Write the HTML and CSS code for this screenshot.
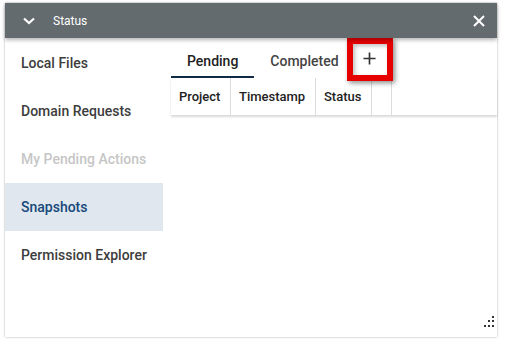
FILE: index.html
```html
<!DOCTYPE html>
<html lang="en">

<head>
  <meta charset="UTF-8" />
  <meta name="viewport" content="width=device-width, initial-scale=1.0" />
  <title>Status</title>
  <link rel="stylesheet" href="styles.css">
</head>

<body>

  <div class="panel">
    <div class="panel-header">
      <svg class="chevron" viewBox="0 0 12 8" width="12" height="8">
        <path d="M1 1.5 L6 6 L11 1.5" fill="none" stroke="#fff" stroke-width="2.2" />
      </svg>
      <span class="panel-title">Status</span>
      <svg class="close" viewBox="0 0 12 12" width="12" height="12">
        <path d="M1 1 L11 11 M11 1 L1 11" fill="none" stroke="#fff" stroke-width="2" />
      </svg>
    </div>

    <div class="panel-body">
      <div class="sidebar">
        <div class="nav-item">Local Files</div>
        <div class="nav-item">Domain Requests</div>
        <div class="nav-item disabled">My Pending Actions</div>
        <div class="nav-item active">Snapshots</div>
        <div class="nav-item">Permission Explorer</div>
      </div>

      <div class="main">
        <div class="tabs">
          <div class="tab active">Pending</div>
          <div class="tab">Completed</div>
          <div class="tab-add">
            <svg viewBox="0 0 14 14" width="13" height="13">
              <path d="M7 0.5 V13.5 M0.5 7 H13.5" fill="none" stroke="#333" stroke-width="1.8" />
            </svg>
          </div>
        </div>

        <div class="table-head">
          <div class="col">Project</div>
          <div class="col">Timestamp</div>
          <div class="col">Status</div>
          <div class="col"></div>
          <div class="col last"></div>
        </div>
      </div>
    </div>

    <svg class="grip" viewBox="0 0 12 12" width="12" height="12">
      <rect x="9" y="0" width="2" height="2" fill="#333" />
      <rect x="5" y="4" width="2" height="2" fill="#333" />
      <rect x="9" y="4" width="2" height="2" fill="#333" />
      <rect x="1" y="9" width="2" height="2" fill="#333" />
      <rect x="5" y="9" width="2" height="2" fill="#333" />
      <rect x="9" y="9" width="2" height="2" fill="#333" />
    </svg>
  </div>

</body>

</html>
```

FILE: styles.css
```css
body {
  font-family: Roboto, "Noto Sans", sans-serif;
  background: #fff;
  margin: 0;
  padding: 0;
  height: 100vh;
  overflow: hidden;
}

.panel {
  position: relative;
  margin: 3px 8px 0 5px;
  height: 334px;
  display: flex;
  flex-direction: column;
  background: #fff;
  box-shadow: 0 0 2px rgba(0, 0, 0, 0.35);
}

.panel-header {
  height: 35px;
  flex-shrink: 0;
  background: #646b6e;
  display: flex;
  align-items: center;
  padding: 0 12px 0 18px;
  box-shadow: 0 2px 4px rgba(0, 0, 0, 0.3);
  position: relative;
  z-index: 2;
}

.chevron {
  display: block;
}

.panel-title {
  color: #fff;
  font-size: 12px;
  margin-left: 18px;
  flex: 1;
}

.close {
  display: block;
}

.panel-body {
  flex: 1;
  display: flex;
}

.sidebar {
  width: 158px;
  margin-top: 1px;
}

.nav-item {
  height: 48px;
  display: flex;
  align-items: center;
  padding-left: 16px;
  font-size: 14px;
  font-weight: 500;
  color: #3d3d3d;
}

.nav-item.disabled {
  color: #c6c6c6;
}

.nav-item.active {
  background: #e0e7ee;
  color: #17497a;
}

.main {
  flex: 1;
  padding-left: 8px;
}

.tabs {
  display: flex;
  height: 40px;
}

.tab {
  padding: 7px 16px 0;
  display: flex;
  align-items: center;
  border-bottom: 2px solid transparent;
  font-size: 14px;
  font-weight: 500;
  color: #444;
}

.tab.active {
  border-bottom-color: #0f2b46;
  color: #222;
}

.tab-add {
  position: relative;
  z-index: 1;
  box-sizing: border-box;
  width: 46px;
  height: 43px;
  margin-left: -8px;
  border: 6px solid #e60000;
  display: flex;
  align-items: center;
  justify-content: center;
  background: #fff;
  box-shadow: 2px 2px 5px rgba(0, 0, 0, 0.45), inset 2px 2px 4px rgba(0, 0, 0, 0.25);
}

.tab-add svg {
  display: block;
  margin-top: -2px;
}

.table-head {
  display: grid;
  grid-template-columns: 60px 85px 56px 20px 1fr;
  height: 37px;
  box-shadow: 0 2px 2px rgba(0, 0, 0, 0.15);
}

.col {
  display: flex;
  align-items: center;
  padding-left: 8px;
  border-right: 1px solid #dcdcdc;
  font-size: 13px;
  font-weight: 500;
  color: #222;
}

.col.last {
  border-right: none;
}

.grip {
  position: absolute;
  right: 2px;
  bottom: 9px;
}
```
